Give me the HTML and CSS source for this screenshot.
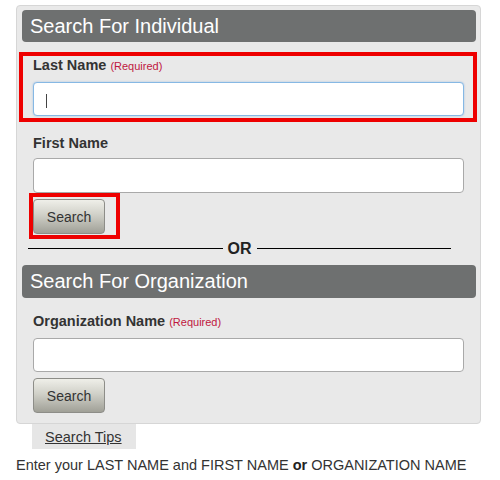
FILE: index.html
```html
<!DOCTYPE html>
<html>
<head>
<meta charset="utf-8">
<link rel="stylesheet" href="styles.css">
</head>
<body>
<div class="panel">
  <div class="bar">Search For Individual</div>
  <div class="field hl">
    <label class="lbl">Last Name <span class="req">(Required)</span></label>
    <div class="inwrap"><input class="txt focus" type="text"><span class="caret"></span></div>
  </div>
  <div class="field f2">
    <label class="lbl">First Name</label>
    <input class="txt tall" type="text">
    <div class="btnmark"><button class="btn">Search</button></div>
  </div>
  <div class="or"><span class="rule"></span><span class="ortext">OR</span><span class="rule"></span></div>
  <div class="bar bar2">Search For Organization</div>
  <div class="field f3">
    <label class="lbl">Organization Name <span class="req">(Required)</span></label>
    <input class="txt" type="text">
    <button class="btn btn3">Search</button>
  </div>
</div>
<div class="tips"><a class="tipslink">Search Tips</a></div>
<p class="note">Enter your LAST NAME and FIRST NAME <b>or</b> ORGANIZATION NAME</p>
</body>
</html>
```

FILE: styles.css
```css
* { box-sizing: border-box; }
body {
  margin: 0;
  background: #fff;
  font-family: "Liberation Sans", Arial, sans-serif;
  color: #333;
}
.panel {
  margin: 5px 0 0 16px;
  width: 465px;
  height: 419px;
  padding: 4px 4px 0 5px;
  background: #e9e9e9;
  border: 1px solid #d6d6d6;
  border-radius: 4px;
}
.bar {
  height: 32px;
  line-height: 32px;
  padding-left: 8px;
  background: #6e7070;
  color: #fff;
  font-size: 20px;
  border-radius: 4px;
}
.bar2 {
  margin-top: 7px;
  height: 33px;
  line-height: 33px;
}
.field { display: block; }
.lbl {
  display: block;
  font-size: 14.5px;
  line-height: 18px;
  font-weight: bold;
  color: #333;
}
.req {
  font-size: 11px;
  font-weight: normal;
  color: #c0173f;
}
.hl {
  margin: 10px -1px 0 -3px;
  border: 4px solid #ee0000;
  padding: 0 9px 2px 10px;
}
.inwrap {
  position: relative;
  margin-top: 7px;
}
.txt {
  display: block;
  width: 100%;
  height: 34px;
  margin: 7px 0 0 0;
  padding: 0 8px;
  background: #fff;
  border: 1px solid #a9a9a9;
  border-radius: 4px;
  font-family: inherit;
  font-size: 14px;
  outline: none;
}
.tall { height: 35px; margin-top: 6px; }
.inwrap .txt { margin-top: 0; }
.focus {
  border-color: #86b8e4;
  box-shadow: 0 0 2px rgba(110, 165, 225, 0.6);
}
.caret {
  position: absolute;
  left: 13px;
  top: 12px;
  width: 1px;
  height: 14px;
  background: #444;
}
.f2 {
  margin-top: 12px;
  padding: 0 12px 0 11px;
}
.f3 {
  margin-top: 14px;
  padding: 0 12px 0 11px;
}
.btn {
  display: block;
  width: 72px;
  height: 35px;
  padding: 0;
  border: 1px solid #8d8d88;
  border-radius: 4px;
  background: linear-gradient(to bottom, #efefe9 0%, #d0d0c8 45%, #a0a097 100%);
  color: #333;
  font-family: inherit;
  font-size: 14px;
}
.btnmark {
  display: inline-block;
  margin: 0 0 0 -4px;
  border: 4px solid #ee0000;
  padding: 2px 11px 1px 0;
}
.btn3 { margin-top: 6px; }
.or {
  display: flex;
  align-items: center;
  gap: 5px;
  margin: 1px 25px 0 6px;
  height: 18px;
}
.rule {
  flex: 1;
  height: 1px;
  background: #000;
  margin-top: -1px;
}
.ortext {
  font-size: 16px;
  font-weight: bold;
  line-height: 18px;
  color: #222;
}
.tips {
  display: block;
  width: max-content;
  margin-left: 32px;
  height: 25px;
  line-height: 25px;
  padding: 0 14px 0 13px;
  background: #e6e6e6;
}
.tipslink {
  font-size: 14.5px;
  color: #333;
  text-decoration: underline;
}
.note {
  margin: 7px 0 0 16px;
  font-size: 14.5px;
  line-height: 18px;
  color: #333;
}
.note b { color: #222; }
```
